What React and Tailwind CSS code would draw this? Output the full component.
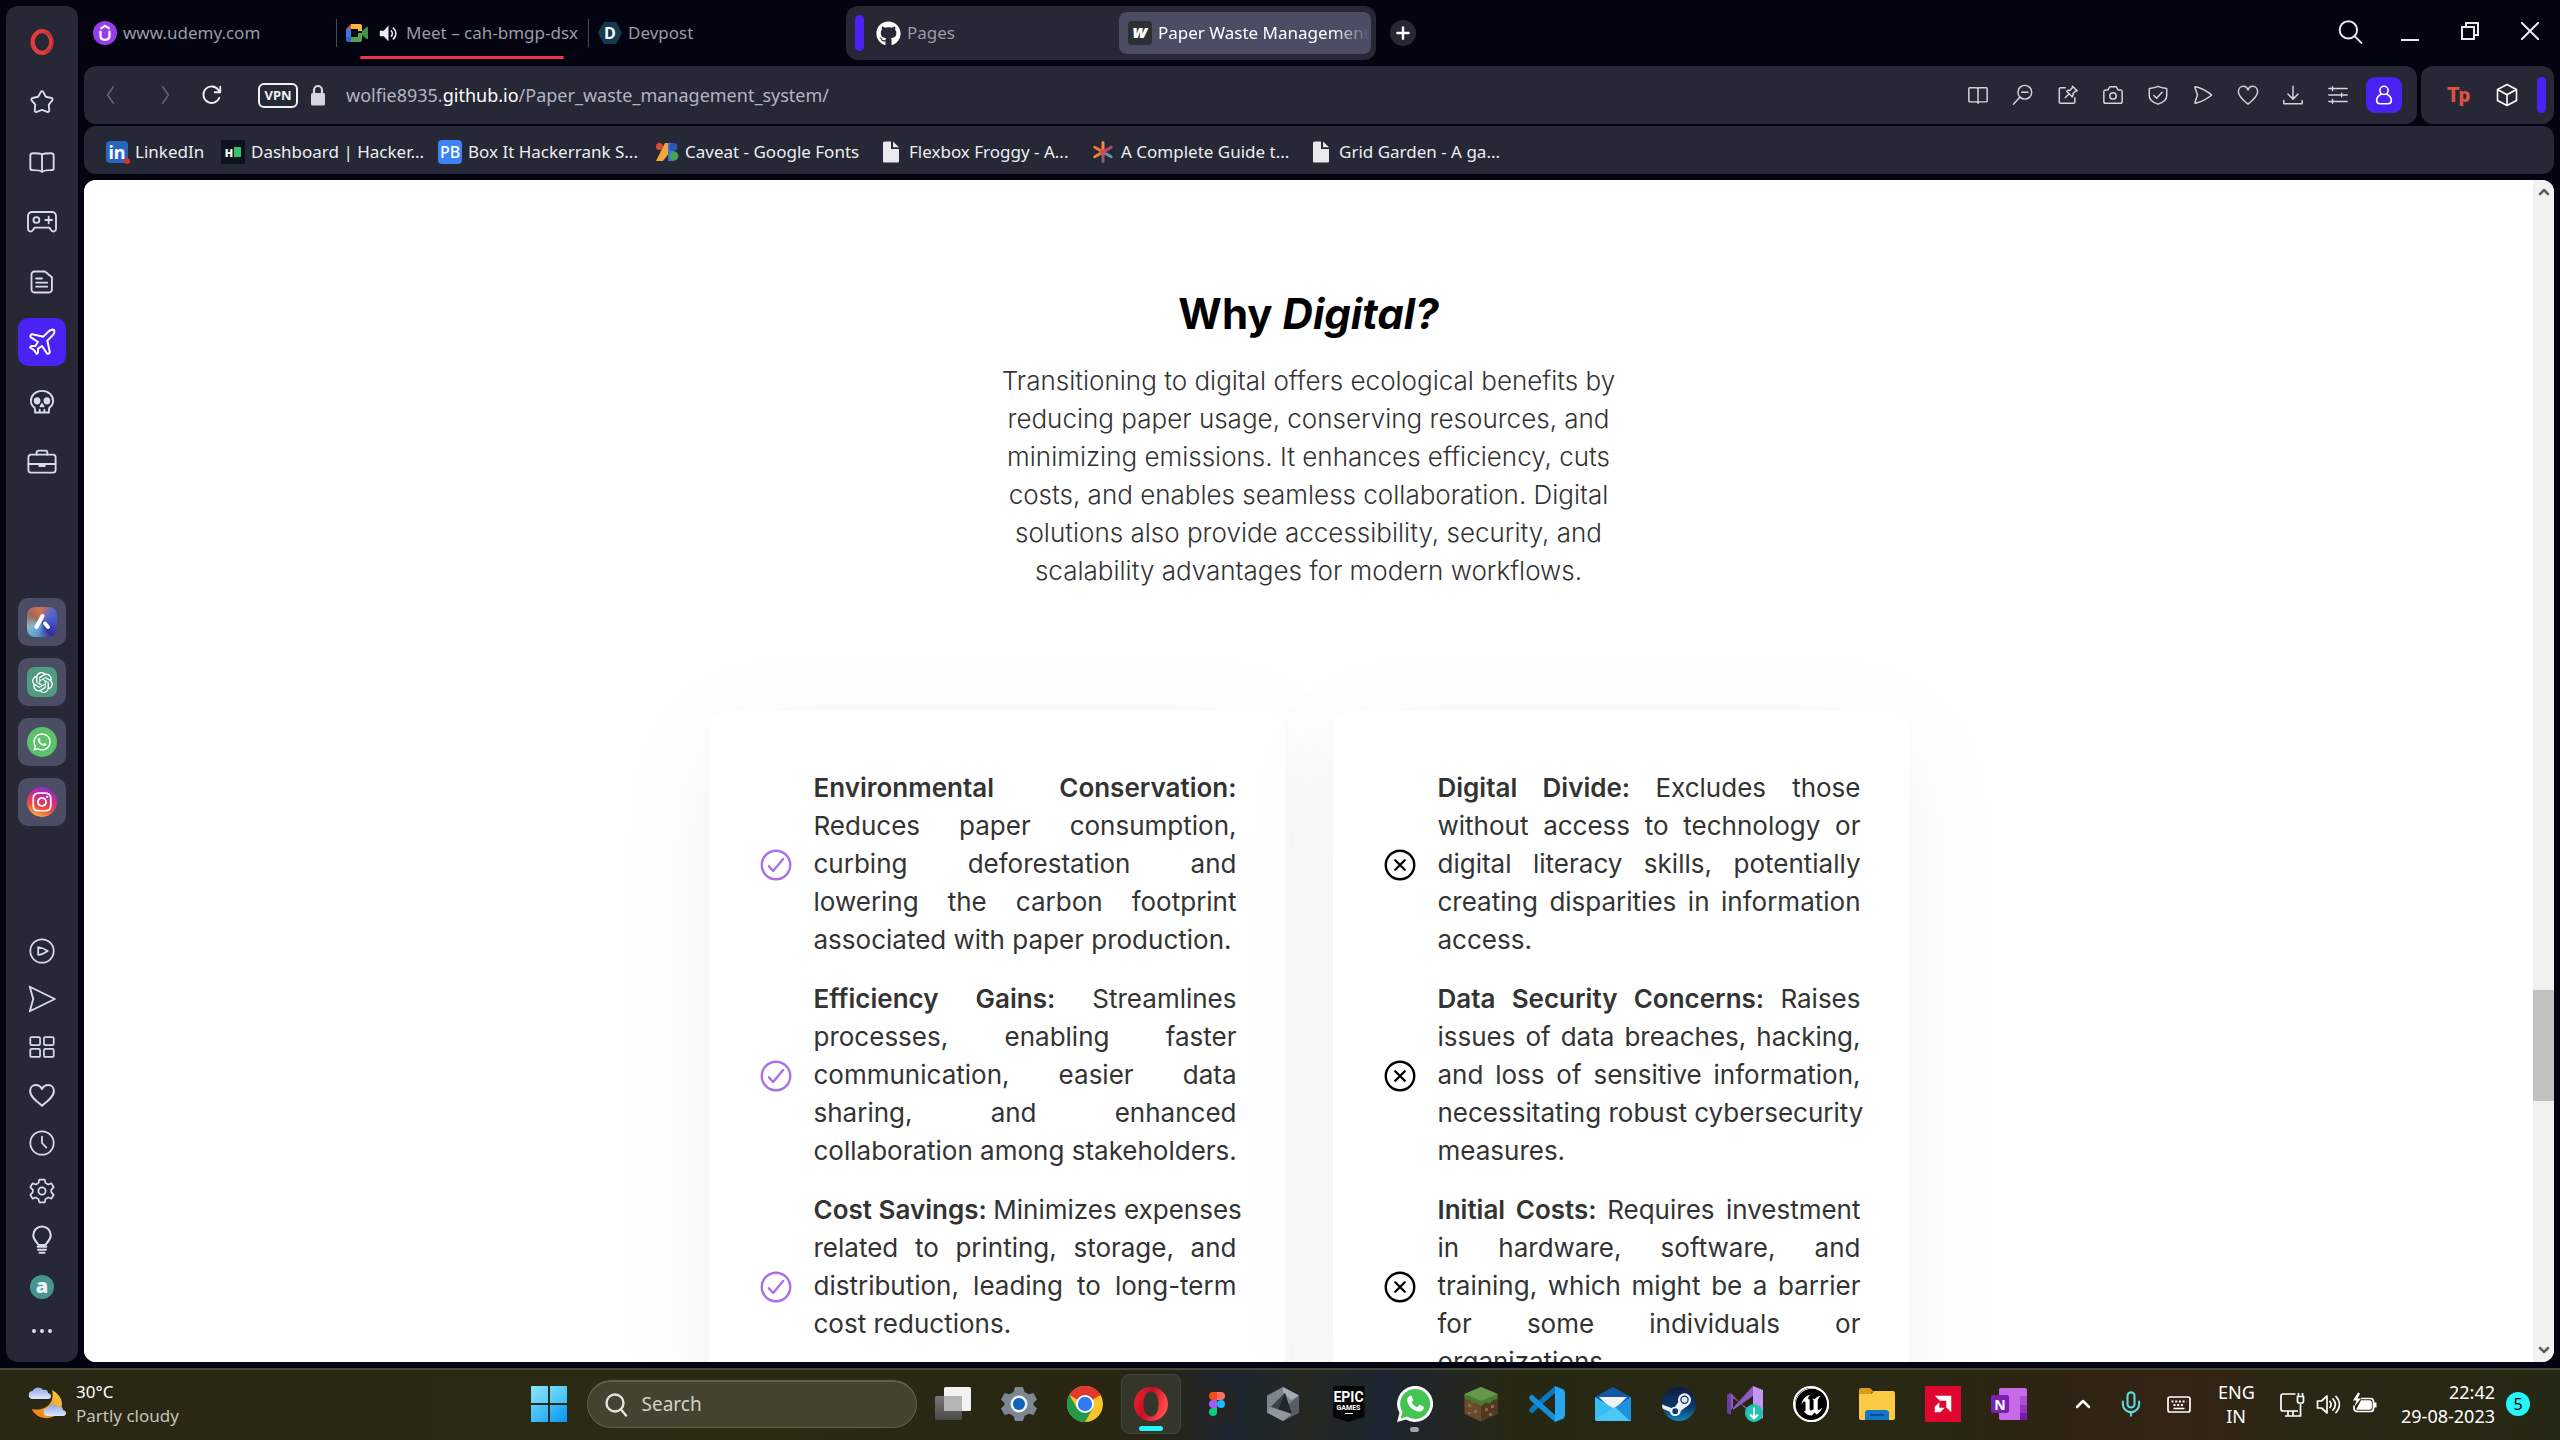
import React from "react";
import { Plane, ChevronUp, Mic } from "lucide-react";
import { FaGithub, FaWhatsapp, FaInstagram, FaSteam } from "react-icons/fa";
import { IoCheckmarkCircleOutline, IoCloseCircleOutline } from "react-icons/io5";
import { SiOpenai, SiUnrealengine } from "react-icons/si";

function Line({ children, className = "size-7", width = 1.6, box = "0 0 24 24" }) {
  return (
    <svg viewBox={box} className={className} fill="none" stroke="currentColor" strokeWidth={width} strokeLinecap="round" strokeLinejoin="round" aria-hidden="true">
      {children}
    </svg>
  );
}

const HeartPath = <path d="M12 20.5C8 17.5 2.5 13.500 2.500 8.800 2.500 5.800 4.600 4 7 4c2.200 0 4 1.200 5 3.200C13 5.200 14.800 4 17 4c2.400 0 4.500 1.800 4.500 4.800 0 4.700-5.500 8.700-9.500 11.700Z" />;

/* ---------- Sidebar ---------- */

const workspaces = [
  ["Speed dials", <Line><path d="M11 3.300c.5-.9 1.500-.9 2 0l2.300 4.200 4.800 1.100c1 .2 1.300 1.200.7 2l-3 3.700.4 4.900c.1 1-.8 1.600-1.700 1.200L12 18.700l-4.500 1.700c-.9.4-1.800-.2-1.700-1.200l.4-4.900-3-3.700c-.6-.8-.3-1.800.7-2l4.800-1.100Z" /></Line>],
  ["Reading", <Line><path d="M12 5.500C10.500 4.600 8 4.500 4.500 4.500 3 4.500 2 5 2 6.500v11c0 1.200.8 1.500 2 1.500 4 0 6.500 0 8 1.500 1.500-1.500 4-1.500 8-1.500 1.200 0 2-.3 2-1.500v-11c0-1.500-1-2-2.500-2-3.500 0-6 .1-7.500 1Zm0 0v15" /></Line>],
  ["Games", <Line className="size-8" width={1.4}><path d="M4.500 4.500h15a3 3 0 0 1 3 3v9.500c0 2.300-2.400 2.800-3.600 1.200l-1.400-2h-11l-1.400 2c-1.200 1.600-3.600 1.100-3.600-1.200V7.500a3 3 0 0 1 3-3ZM17 8v5m-2.500-2.500h5" /><circle cx="7.800" cy="10.500" r="2.200" /></Line>],
  ["Documents", <Line><path d="M5 3h9.500l6 5v10.500a2.500 2.500 0 0 1-2.500 2.500H5.500A2.500 2.500 0 0 1 3 18.500v-13A2.500 2.500 0 0 1 5.500 3ZM7 9h5M7 12.500h9.500M7 16h9.500" /></Line>],
  ["Travel", <Plane className="size-8" strokeWidth={1.5} />],
  ["Skull", <Line><path d="M12 2.500c-5.500 0-9.500 3.600-9.500 8.500 0 2.700 1 4.500 3 5.800.5.400.5.700.5 1.200v3h12v-3c0-.5 0-.8.5-1.200 2-1.300 3-3.100 3-5.800 0-4.900-4-8.500-9.500-8.500ZM10 21v-2.500m4 2.500v-2.500" /><ellipse cx="7.800" cy="11" rx="2.100" ry="2.300" fill="currentColor" /><ellipse cx="16.200" cy="11" rx="2.100" ry="2.300" fill="currentColor" /><path d="m12 13.800 1.300 2h-2.600Z" fill="currentColor" /></Line>],
  ["Work", <Line className="size-8" width={1.4}><rect x="1.800" y="6.500" width="20.400" height="13.500" rx="2" /><path d="M8 6.500V4.800c0-.8.500-1.300 1.300-1.300h5.400c.8 0 1.300.5 1.300 1.300v1.700M2 13.500h20" /><path d="M10 13.500h4v1.500h-4Z" fill="currentColor" /></Line>],
];

function AriaLogo() {
  return (
    <span className="grid size-[30px] place-items-center rounded-lg bg-[conic-gradient(from_300deg,#a0675c,#d0734a,#5a68c8,#4450c8,#3a2aa0,#5b9ad0,#86b7cf,#a0675c)]">
      <svg viewBox="0 0 24 24" className="size-6" stroke="#fff" strokeLinecap="round" aria-hidden="true">
        <path d="m12.500 6-6 11" strokeWidth="4" /><path d="m15 13.500 3 3.500" strokeWidth="4" />
      </svg>
    </span>
  );
}

const messengers = [
  ["Aria", <AriaLogo />],
  ["ChatGPT", <span className="grid size-[30px] place-items-center rounded-lg bg-[#4f9c80] text-white"><SiOpenai className="size-[21px]" /></span>],
  ["WhatsApp", <span className="grid size-[30px] place-items-center rounded-full bg-[#5dc26a] text-white"><FaWhatsapp className="size-5" /></span>],
  ["Instagram", <span className="grid size-[30px] place-items-center rounded-full bg-[linear-gradient(20deg,#f6c344_5%,#ee4a3c_35%,#d42a8c_60%,#7a2bd8_95%)] text-white"><FaInstagram className="size-[22px]" /></span>],
];

const tools = [
  ["Player", <Line className="size-[26px]"><circle cx="12" cy="12" r="10.800" /><path d="M8.500 8.300c3 .4 6 1.700 8.800 3.700-2.800 2-5.800 3.300-8.800 3.700Z" /></Line>],
  ["My Flow", <Line><path d="M1.500 1.500 23 12 1.500 22.500l3-10.500Z" /></Line>],
  ["Tabs", <Line className="size-[26px]"><rect x="1.200" y="2.800" width="9" height="7.500" rx="1.200" /><rect x="13.800" y="2.800" width="9" height="7.500" rx="1.200" /><rect x="1.200" y="13.700" width="9" height="7.500" rx="1.200" /><rect x="13.800" y="13.700" width="9" height="7.500" rx="1.200" /></Line>],
  ["Favorites", <Line className="size-[30px]">{HeartPath}</Line>],
  ["History", <Line className="size-[26px]"><circle cx="12" cy="12" r="10.800" /><path d="M12 6v6l4 4.200" /></Line>],
  ["Settings", <Line className="size-[26px]"><path d="M9.500 1.500h5l.7 3 2.500 1.500 3-1 2.100 3.500L20.500 11v2l2.300 2.500-2.100 3.500-3-1-2.500 1.500-.7 3h-5l-.7-3L6.300 18l-3 1-2.100-3.500L3.500 13v-2L1.200 8.500 3.300 5l3 1 2.500-1.500Z" /><circle cx="12" cy="12" r="3.300" /></Line>],
  ["Easy setup", <Line className="size-[30px]"><path d="M9 16.800c0-1.500-4-3.600-4-7.800a7 7 0 0 1 14 0c0 4.200-4 6.300-4 7.800ZM8.500 18.200h7M8.800 20.600h6.400M10 23h4" /></Line>],
  ["Account", <span className="grid size-6 place-items-center rounded-full bg-[#47968c] font-['Open_Sans',sans-serif] text-xl leading-none font-extrabold text-[#eef]"><span className="pb-0.5">a</span></span>],
];

function Sidebar() {
  return (
    <nav aria-label="Browser sidebar" className="mt-1.5 mb-1.5 ml-1.5 flex w-18 shrink-0 flex-col items-center rounded-xl bg-[#262835] pt-3 text-[#d8dce8]">
      <button aria-label="Opera menu" className="grid size-12 place-items-center">
        <svg viewBox="0 0 24 24" className="size-[26px]" fill="none" aria-hidden="true"><ellipse cx="12" cy="12" rx="8.600" ry="10" stroke="#e33b3b" strokeWidth="4" /><path d="M15 2.500c5 2 7 6 7 9.500s-2 7.500-7 9.500" stroke="#b8303a" strokeWidth="1.500" /></svg>
      </button>
      <div className="mt-3 flex flex-col gap-3">
        {workspaces.map(([label, icon]) => (
          <button key={label} aria-label={label} className={label === "Travel" ? "grid size-12 place-items-center rounded-[10px] bg-[#4a22f4] text-white" : "grid size-12 place-items-center"}>{icon}</button>
        ))}
      </div>
      <div className="mt-28 flex flex-col gap-3">
        {messengers.map(([label, icon]) => (
          <button key={label} aria-label={label} className="grid size-12 place-items-center rounded-[10px] bg-[#4a4d64]">{icon}</button>
        ))}
      </div>
      <div className="mt-auto mb-[11px] flex flex-col items-center">
        {tools.map(([label, icon]) => (
          <button key={label} aria-label={label} className="grid size-12 place-items-center">{icon}</button>
        ))}
        <button aria-label="More" className="grid h-10 w-12 place-items-center">
          <svg viewBox="0 0 24 24" className="size-6" fill="currentColor" aria-hidden="true"><circle cx="4" cy="12" r="2" /><circle cx="12" cy="12" r="2" /><circle cx="20" cy="12" r="2" /></svg>
        </button>
      </div>
    </nav>
  );
}

/* ---------- Tab strip ---------- */

function MeetIcon() {
  return (
    <svg viewBox="0 0 24 24" className="size-6 shrink-0" aria-hidden="true">
      <path d="M6 3h9a2 2 0 0 1 2 2v5h-4V8H6Z" fill="#f5b93a" /><path d="M6 3v5H1Z" fill="#e5483a" /><path d="M1 8h5v8H1Z" fill="#3a78e8" /><path d="M1 16h5v5H3a2 2 0 0 1-2-2Z" fill="#2f62d0" /><path d="M6 16h7v-4h4v7a2 2 0 0 1-2 2H6Z" fill="#4fa34c" /><path d="m17 10 4.500-4c.8-.5 1.500-.2 1.500.7v10.600c0 .9-.7 1.200-1.500.7L17 14Z" fill="#3f9048" />
    </svg>
  );
}

function TabStrip() {
  return (
    <header className="flex h-[66px] shrink-0 items-center text-[17px] text-[#9a9ba3]">
      <div role="tablist" className="flex items-center">
        <button role="tab" className="flex h-12 w-63 shrink-0 items-center gap-1.5 pl-[9px]">
          <span className="grid size-6 place-items-center rounded-full bg-[#9a3cea] text-white">
            <Line className="size-[18px]" width={3}><path d="M6 10v6c0 3 2.500 5 6 5s6-2 6-5v-6M7 5.500 12 2.500l5 3" /></Line>
          </span>
          <span>www.udemy.com</span>
        </button>
        <button role="tab" className="relative flex h-12 w-63 shrink-0 items-center">
          <span className="h-7 w-px shrink-0 bg-[#454857]" />
          <span className="w-2" />
          <MeetIcon />
          <svg viewBox="0 0 24 24" className="mr-2 ml-2.5 size-[19px] shrink-0" fill="#e8eaf0" aria-hidden="true"><path d="M1 8.500h5L12 2v20l-6-6.500H1Z" /><path d="M15 8c2.500 2 2.500 6 0 8M17.500 4.500c5 4 5 11 0 15" stroke="#e8eaf0" strokeWidth="2" fill="none" /></svg>
          <span className="whitespace-nowrap">Meet – cah-bmgp-dsx</span>
          <span className="absolute inset-x-6 -bottom-0.5 h-[3px] rounded-full bg-[#ee3355]" />
        </button>
        <button role="tab" className="flex h-12 w-63 shrink-0 items-center">
          <span className="h-7 w-px shrink-0 bg-[#454857]" />
          <span className="ml-[9px] grid h-[22px] w-6 place-items-center bg-[#153a50] font-['Open_Sans',sans-serif] text-base leading-none font-bold text-white [clip-path:polygon(25%_0,75%_0,100%_50%,75%_100%,25%_100%,0_50%)]">D</span>
          <span className="ml-1.5">Devpost</span>
        </button>
        <div className="ml-1.5 flex h-[54px] items-center rounded-xl bg-[#262835] pr-[5px] pl-[9px]">
          <span className="mr-[3px] h-9 w-[9px] rounded-full bg-[#4a22f4]" />
          <button role="tab" className="flex h-[42px] w-63 items-center gap-1.5 pl-[9px]">
            <FaGithub className="size-[25px] text-white" />
            <span>Pages</span>
          </button>
          <button role="tab" aria-selected="true" className="flex h-[42px] w-63 items-center gap-1.5 rounded-lg bg-[#4a4d64] px-[9px] text-white">
            <span className="grid size-6 shrink-0 place-items-center rounded-sm bg-[#2b3035] font-['Open_Sans',sans-serif] text-lg leading-none font-extrabold text-white italic"><span className="pb-1">w</span></span>
            <span className="whitespace-nowrap [mask-image:linear-gradient(to_right,#000_82%,transparent)]">Paper Waste Management</span>
          </button>
        </div>
      </div>
      <button aria-label="New tab" className="ml-3.5 grid size-[26px] place-items-center rounded-full bg-[#262835] text-white">
        <Line className="size-4" width={3.500}><path d="M12 3.500v17M3.500 12h17" /></Line>
      </button>
      <div className="-mr-1.5 ml-auto flex pb-1 text-[#e8eaf0]">
        <button aria-label="Search tabs" className="grid h-12 w-15 place-items-center"><Line className="size-[26px]" width={1.800}><circle cx="10.500" cy="11" r="8" /><path d="m16.500 17 6 6" /></Line></button>
        <button aria-label="Minimize" className="grid h-12 w-15 place-items-center"><span className="mt-[18px] h-0.5 w-[18px] bg-current" /></button>
        <button aria-label="Restore" className="grid h-12 w-15 place-items-center"><svg viewBox="0 0 18 18" className="size-[18px]" fill="none" stroke="currentColor" strokeWidth="2" aria-hidden="true"><path d="M1 5h12v12H1ZM5 5V1h12v12h-4" /></svg></button>
        <button aria-label="Close" className="grid h-12 w-15 place-items-center"><svg viewBox="0 0 18 18" className="size-[18px]" fill="none" stroke="currentColor" strokeWidth="2" aria-hidden="true"><path d="m0 0 18 18M18 0 0 18" /></svg></button>
      </div>
    </header>
  );
}

/* ---------- Address bar ---------- */

const actions = [
  ["Reader", <path d="M12 4v16M3 4h7c1.200 0 2 .5 2 1.500C12 4.500 12.800 4 14 4h7a1 1 0 0 1 1 1v13.500a1 1 0 0 1-1 1h-7c-1.200 0-2 .5-2 1.500 0-1-.8-1.500-2-1.500H3a1 1 0 0 1-1-1V5a1 1 0 0 1 1-1Z" />],
  ["Zoom out", <><circle cx="14" cy="9" r="7.500" /><path d="M8.500 14.500 1.500 22M10.500 9h7" /></>],
  ["Pin", <><path d="M9 4H4a1.500 1.500 0 0 0-1.500 1.500v14A1.500 1.500 0 0 0 4 21h14a1.500 1.500 0 0 0 1.500-1.500V15M9 15l4-4" /><path d="m17 2.500 5 5-2 .5-2.500 2.500c.3 1.500 0 2.700-1 3.500l-6-6c.8-1 2-1.300 3.500-1L16.500 4.500Z" /></>],
  ["Snapshot", <><path d="M4 6.500h2.500l2-3.500h7l2 3.500H20a2 2 0 0 1 2 2V19a2 2 0 0 1-2 2H4a2 2 0 0 1-2-2V8.500a2 2 0 0 1 2-2Z" /><circle cx="12" cy="13" r="3.500" /></>],
  ["Ad blocker", <><path d="M12 2.500c3 1.500 6 2 9.500 2.500v8c0 4-4 7-9.500 9-5.500-2-9.500-5-9.500-9V5C6 4.500 9 4 12 2.500Z" /><path d="m7.500 12.500 3 3 6-6.500" /></>],
  ["Send", <path d="M4 3c6 1.500 12 4.500 17.500 9C16 16.500 10 19.500 4 21c-.5.200-1-.3-.8-.8L6 12 3.200 3.800C3 3.300 3.500 2.800 4 3Z" />],
  ["Favorite", <path d="M12 22C8 18.500 1.500 14 1.500 8.500 1.500 5 4 2.500 7 2.500c2.200 0 4 1.500 5 4 1-2.500 2.800-4 5-4 3 0 5.500 2.500 5.500 6C22.500 14 16 18.500 12 22Z" />],
  ["Downloads", <path d="M12 2.500V16M6.500 11l5.500 5.500 5.500-5.500M2 18v3.500h20V18" />],
  ["Easy setup", <path d="M2 5h20M2 12h20M2 19h20M6 3v4M16 10v4M6 17v4" />],
];

function AddressBar() {
  return (
    <div className="flex h-[58px] shrink-0 gap-1 text-[#d2d5dd]">
      <div className="flex min-w-0 flex-1 items-center rounded-xl bg-[#262835] pr-[15px]">
        <button aria-label="Back" className="grid h-10 w-[54px] place-items-center text-[#656875]"><Line className="size-5" width={1.800}><path d="m15 2-7 10 7 10" /></Line></button>
        <button aria-label="Forward" className="grid h-10 w-[54px] place-items-center text-[#656875]"><Line className="size-5" width={1.800}><path d="m9 2 7 10-7 10" /></Line></button>
        <button aria-label="Reload" className="grid h-10 w-10 place-items-center text-[#f0f1f5]"><Line className="size-[22px]" width={2}><path d="M20 15a9 9 0 1 1-1-8.500l1.500 2M21 3v6h-6" /></Line></button>
        <button className="ml-[26px] grid h-[25px] w-10 place-items-center rounded-md border-2 border-[#f0f1f5] text-[13px] leading-none font-bold text-[#f0f1f5]">VPN</button>
        <svg viewBox="0 0 16 22" className="ml-3 h-[22px] w-4 text-[#d4d7de]" aria-label="Secure connection"><path d="M4 10V6a4 4 0 0 1 8 0v4" fill="none" stroke="currentColor" strokeWidth="2.200" /><rect x="1" y="9" width="14" height="12.500" rx="1.500" fill="currentColor" /></svg>
        <div className="relative ml-5 h-10 flex-1 text-[18px] leading-10">
          <input aria-label="Address" defaultValue="wolfie8935.github.io/Paper_waste_management_system/" className="absolute inset-0 w-full bg-transparent text-transparent outline-none" />
          <p aria-hidden="true" className="pointer-events-none text-[#b2b5c0]">wolfie8935.<span className="text-white">github.io</span>/Paper_waste_management_system/</p>
        </div>
        {actions.map(([label, icon]) => (
          <button key={label} aria-label={label} className="grid h-10 w-[45px] place-items-center"><Line className="size-[22px]" width={1.600}>{icon}</Line></button>
        ))}
        <button aria-label="Profile" className="ml-1.5 grid size-9 place-items-center rounded-[9px] bg-[#4a22f4] text-white"><Line className="size-[22px]" width={1.800}><circle cx="12" cy="7" r="4.500" /><path d="M8.500 11.500C5.500 13 4 15.500 4 18c0 2.500 1.500 3.500 4 3.500h8c2.500 0 4-1 4-3.500 0-2.500-1.500-5-4.500-6.500" /></Line></button>
      </div>
      <div className="flex items-center rounded-xl bg-[#262835] pr-2 pl-[26px]">
        <button aria-label="Toucan extension" className="w-6 text-left font-['Roboto',sans-serif] text-xl leading-none font-black text-[#e2513f]">Tp</button>
        <button aria-label="Extensions" className="ml-6 text-white"><Line className="size-6" width={1.600}><path d="m12 1.500 9.500 5v11l-9.500 5-9.500-5v-11ZM2.500 6.500l9.500 5.300 9.500-5.300M12 11.800v10.700" /></Line></button>
        <span className="ml-[18px] h-9 w-[9px] rounded-full bg-[#4a22f4]" />
      </div>
    </div>
  );
}

/* ---------- Bookmarks ---------- */

const FileIcon = <svg viewBox="0 0 24 24" className="size-6" fill="#e8eaee" aria-hidden="true"><path d="M4 3a1.500 1.500 0 0 1 1.500-1.500H12V9h8v12.500a1 1 0 0 1-1 1H5a1 1 0 0 1-1-1ZM14 1.500 20 7.300h-6Z" /></svg>;

const bookmarks = [
  ["LinkedIn", "w-29", <span className="relative grid size-[22px] place-items-center rounded-sm bg-[#2966c0] text-lg leading-none font-bold text-white">in<i className="absolute -right-0.5 -bottom-px size-1.5 rounded-full bg-[#d93025]" /></span>],
  ["Dashboard | Hacker...", "w-[217px]", <span className="flex size-6 items-center justify-center gap-px bg-[#0e141e] text-[11px] leading-none font-black text-white">H<i className="h-2.5 w-[7px] bg-[#2ec866]" /></span>],
  ["Box It Hackerrank S...", "w-[217px]", <span className="grid size-6 place-items-center rounded-sm bg-[#3b82f6] text-base leading-none font-medium text-white">PB</span>],
  ["Caveat - Google Fonts", "w-56", <svg viewBox="0 0 24 24" className="size-6" aria-hidden="true"><path d="M10 3h5v9L8 21H1Z" fill="#f2a73b" /><circle cx="4.500" cy="6.500" r="3.500" fill="#dc4a3d" /><path d="M13 3h5v18h-5Z" fill="#3a6fe0" /><circle cx="18.500" cy="7" r="4" fill="#2a58b8" /><path d="M17 11a5 5 0 0 1 0 10Z" fill="#46a458" /><circle cx="19" cy="16" r="4.500" fill="#46a458" /></svg>],
  ["Flexbox Froggy - A...", "w-[212px]", FileIcon],
  ["A Complete Guide t...", "w-[218px]", <svg viewBox="0 0 24 24" className="size-6" strokeWidth="3" strokeLinecap="round" aria-hidden="true"><path d="M12 2.500V12" stroke="#ee8a3a" /><path d="M12 12v9.500" stroke="#8a5a80" /><path d="M3.800 7.200 12 12" stroke="#ee7a3a" /><path d="M3.800 16.800 12 12" stroke="#ec8438" /><path d="M20.200 7.200 12 12" stroke="#b34a6a" /><path d="M20.200 16.800 12 12" stroke="#5a9aa8" /><circle cx="12" cy="12" r="1.500" stroke="#d64a4e" /></svg>],
  ["Grid Garden - A ga...", "w-[212px]", FileIcon],
];

function Bookmarks() {
  return (
    <nav aria-label="Bookmarks" className="mt-0.5 flex h-12 shrink-0 items-center rounded-xl bg-[#262835] pt-1 pl-[21px] text-[17px] text-[#eceef3]">
      {bookmarks.map(([label, width, icon]) => (
        <a key={label} href="#page" className={`flex shrink-0 items-center whitespace-nowrap ${width}`}>
          <span className="mr-1.5 grid size-6 place-items-center">{icon}</span>{label}
        </a>
      ))}
    </nav>
  );
}

/* ---------- Page ---------- */

const pros = [
  ["Environmental Conservation:", ["", "Reduces paper consumption,", "curbing deforestation and", "lowering the carbon footprint", "associated with paper production."]],
  ["Efficiency Gains:", ["Streamlines", "processes, enabling faster", "communication, easier data", "sharing, and enhanced", "collaboration among stakeholders."]],
  ["Cost Savings:", ["Minimizes expenses", "related to printing, storage, and", "distribution, leading to long-term", "cost reductions."]],
];

const cons = [
  ["Digital Divide:", ["Excludes those", "without access to technology or", "digital literacy skills, potentially", "creating disparities in information", "access."]],
  ["Data Security Concerns:", ["Raises", "issues of data breaches, hacking,", "and loss of sensitive information,", "necessitating robust cybersecurity", "measures."]],
  ["Initial Costs:", ["Requires investment", "in hardware, software, and", "training, which might be a barrier", "for some individuals or", "organizations."]],
];

function Card({ items, Icon, tint }) {
  return (
    <ul className="flex w-xl flex-col gap-[19px] rounded-[18px] bg-white px-12 pt-[58px] pb-12 shadow-[0_24px_112px_rgba(0,0,0,0.055)]">
      {items.map(([title, lines]) => (
        <li key={title} className="flex min-h-48 items-center gap-[19px]">
          <Icon className={`size-[38px] shrink-0 ${tint}`} aria-hidden="true" />
          <p className="min-w-0 flex-1 self-start text-[26px] leading-[38px] whitespace-nowrap text-[#333]">
            {lines.map((line, i) => (
              <span key={i} className={i === lines.length - 1 ? "block" : "block [text-align-last:justify]"}>
                {i === 0 && <strong className="font-semibold">{title} </strong>}
                {line}
              </span>
            ))}
          </p>
        </li>
      ))}
    </ul>
  );
}

function Page() {
  return (
    <div id="page" className="mt-1.5 mb-1.5 flex min-h-0 flex-1 overflow-hidden rounded-xl bg-white">
      <main className="min-w-0 flex-1 overflow-hidden bg-white pt-[110px] font-['Inter',sans-serif]">
        <h1 className="text-center text-[42px] leading-12 font-bold text-black">Why <em>Digital?</em></h1>
        <p className="mt-6 text-center text-[26px] leading-[38px] font-light text-[#333]">
          Transitioning to digital offers ecological benefits by<br />
          reducing paper usage, conserving resources, and<br />
          minimizing emissions. It enhances efficiency, cuts<br />
          costs, and enables seamless collaboration. Digital<br />
          solutions also provide accessibility, security, and<br />
          scalability advantages for modern workflows.
        </p>
        <div className="mt-[121px] flex items-start justify-center gap-12">
          <Card items={pros} Icon={IoCheckmarkCircleOutline} tint="text-[#a970e8]" />
          <Card items={cons} Icon={IoCloseCircleOutline} tint="text-black" />
        </div>
      </main>
      <div aria-hidden="true" className="flex w-[21px] shrink-0 flex-col items-center bg-[#f1f1f1] text-[#606060]">
        <Line className="mt-1.5 size-3" width={5}><path d="m4 16 8-8 8 8" /></Line>
        <span className="mt-auto h-[111px] w-full bg-[#c1c1c1]" />
        <span className="h-[243px]" />
        <Line className="mb-1.5 size-3" width={5}><path d="m4 8 8 8 8-8" /></Line>
      </div>
    </div>
  );
}

/* ---------- Taskbar ---------- */

const apps = [
  ["Task view", <svg viewBox="0 0 36 36" className="size-9" aria-hidden="true"><defs><linearGradient id="tv" x1="0" y1="0" x2="0" y2="1"><stop stopColor="#777" /><stop offset="1" stopColor="#4a4a4a" /></linearGradient></defs><rect y="10" width="27" height="24" rx="1.500" fill="url(#tv)" /><rect x="9" y="1" width="27" height="24" rx="1.500" fill="#f2f2f2" /><path d="M9 10h18v15H10.500A1.500 1.500 0 0 1 9 23.500Z" fill="#b4b4b4" /></svg>],
  ["Settings", <svg viewBox="0 0 36 36" className="size-9" aria-hidden="true"><path d="M14 1h8l1.500 5 4 2.200 5-1.300 3.500 6.500-3.500 3.600v2l3.500 3.600-3.500 6.500-5-1.300-4 2.200-1.500 5h-8l-1.500-5-4-2.200-5 1.300L0 22.600 3.500 19v-2L0 13.400l3.500-6.500 5 1.300 4-2.200Z" fill="#7b8791" /><circle cx="18" cy="18" r="8.500" fill="#eef2f5" /><circle cx="18" cy="18" r="6" fill="#0f64b5" /></svg>],
  ["Chrome", <svg viewBox="0 0 36 36" className="size-9" aria-hidden="true"><circle cx="18" cy="18" r="18" fill="#f9c32c" /><path d="M18 18 2.400 9A18 18 0 0 1 33.600 9Z" fill="#e03a2e" /><path d="M18 0A18 18 0 0 1 33.600 9H18Z" fill="#e03a2e" /><path d="M2.400 9A18 18 0 0 0 18 36l7.800-13.500H10.200Z" fill="#229a49" /><circle cx="18" cy="18" r="9" fill="#fff" /><circle cx="18" cy="18" r="7.200" fill="#2f7cf0" /></svg>],
  ["Opera", <svg viewBox="0 0 36 36" className="size-9" aria-hidden="true"><defs><linearGradient id="op" x1="0" y1="0" x2="1" y2="0.400"><stop stopColor="#f22434" /><stop offset=".5" stopColor="#c80f22" /><stop offset="1" stopColor="#ff4a4a" /></linearGradient></defs><path fillRule="evenodd" d="M18 1c9.500 0 17 7.500 17 17s-7.500 17-17 17S1 27.500 1 18 8.500 1 18 1Zm0 4.500c-4.800 0-7.500 5.500-7.500 12.500S13.200 30.500 18 30.500 25.500 25 25.500 18 22.800 5.500 18 5.500Z" fill="url(#op)" /></svg>],
  ["Figma", <svg viewBox="0 0 36 36" className="size-9" aria-hidden="true"><rect width="36" height="36" rx="3" fill="#242424" /><path d="M14 6h4v8h-4a4 4 0 0 1 0-8Z" fill="#f24e1e" /><path d="M18 6h4a4 4 0 0 1 0 8h-4Z" fill="#ff7262" /><path d="M14 14h4v8h-4a4 4 0 0 1 0-8Z" fill="#a259ff" /><circle cx="22" cy="18" r="4" fill="#1abcfe" /><path d="M14 22h4v4a4 4 0 1 1-4-4Z" fill="#0acf83" /></svg>],
  ["Unity", <svg viewBox="0 0 36 36" className="size-9" aria-hidden="true"><path d="m18 1 16 8.500v17L18 35 2 26.500v-17Z" fill="#7d858e" /><path d="m18 1 16 8.500-8 4.500L18 6Z" fill="#a5adb5" /><path d="M34 9.500v17L18 35V23Z" fill="#565d66" /><path d="M20 7 6 21l7 3 14 4-3-9Z" fill="#22262c" /><path d="m20 7-7 17-7-3Z" fill="#3c424a" /><path d="m2 26.500 4-5.500 21 7-9 7Z" fill="#8f979f" /></svg>],
  ["Epic Games", <span className="flex h-9 w-8 flex-col items-center bg-[#060606] pt-1 font-['Roboto',sans-serif] leading-none font-bold text-white [clip-path:polygon(0_0,100%_0,100%_86%,50%_100%,0_86%)]"><span className="text-sm leading-[14px]">EPIC</span><span className="text-[7px] leading-[9px]">GAMES</span><span className="h-px w-2 bg-white" /></span>],
  ["WhatsApp", <svg viewBox="0 0 36 36" className="size-9" aria-hidden="true"><path d="M0 36 2.500 27A18 18 0 1 1 9 33.500Z" fill="#fff" /><path d="m3.500 32.500 2-6.500a15 15 0 1 1 4.500 4.500Z" fill="#43c554" /><path d="M12.500 10c1-.8 2-.5 2.400.5l1.200 3c.2.600 0 1-.4 1.500l-1 1.200c1.300 2.500 3 4 5.600 5l1.500-1.700c.4-.5.800-.6 1.400-.4l3 1.400c.8.400.8 1 .5 2-.8 2.500-3.200 3.500-5.500 3-6-1.300-10-5.500-11-10.500-.3-2 .6-4 2.300-5Z" fill="#fff" /></svg>],
  ["Minecraft", <svg viewBox="0 0 36 36" className="size-9" aria-hidden="true"><path d="m18 1 16.500 7v20L18 35.500 1.500 28V8Z" fill="#6a4a2f" /><path d="M18 15v20.500L34.500 28V8Z" fill="#533822" /><path d="m18 1 16.500 7v5L30 14l-3 3.500-4-1L18 20l-5-3.500-3 .5-3.500-3-5-1V8Z" fill="#4b7a2e" /><path d="m18 1 16.500 7L18 15 1.500 8Z" fill="#66974a" /><path d="M5 18h3v3H5Zm6 6h3v3h-3Zm-6 2h3v2H5Zm17-4h3v3h-3Zm6-3h3v3h-3Zm-2 8h3v3h-3Z" fill="#8b6845" /></svg>],
  ["Visual Studio Code", <svg viewBox="0 0 36 36" className="size-9" aria-hidden="true"><path d="M26 7 3 27.500 0 25l1-3L26 0Z" fill="#0a78c0" /><path d="M26 29 3 8.500 0 11l1 3 25 22Z" fill="#148fdc" /><path d="m26 0 8.500 3.500L36 6v24l-1.500 2.500L26 36Z" fill="#2aa7f3" /></svg>],
  ["Mail", <svg viewBox="0 0 36 36" className="size-9" aria-hidden="true"><path d="M0 11 18 1l18 10v10H0Z" fill="#0e5aa8" /><path d="M4 11h28L18 25Z" fill="#f2f2f2" /><path d="M0 11 36 33v2H1.500L0 33.500Z" fill="#35bdf6" /><path d="M36 11v22.500L34.500 35 16 24Z" fill="#1e93e0" /><path d="M0 33.500 20 21l15 14H1.500Z" fill="#4ac8f8" /></svg>],
  ["Steam", <span className="grid size-[34px] place-items-center rounded-full bg-[linear-gradient(#101a44,#0c3a6c_60%,#1183bd)]"><svg viewBox="0 0 34 34" className="size-[34px]" aria-hidden="true"><path d="M0 17.500 9.500 21c1-.6 2-.9 3.200-.8L17 14l9 4.500-7.200 5.300a5.600 5.600 0 0 1-11 1L.8 21.800A17 17 0 0 1 0 17.500Z" fill="#edf1f5" /><circle cx="13.200" cy="24.200" r="3.600" fill="#0c3a6c" stroke="#edf1f5" strokeWidth="1.500" /><circle cx="22.500" cy="12.800" r="5.400" fill="#0c2a56" stroke="#edf1f5" strokeWidth="2.400" /><circle cx="22.500" cy="12.800" r="3" fill="#dfe6ec" /></svg></span>],
  ["Visual Studio Installer", <svg viewBox="0 0 36 36" className="size-9" aria-hidden="true"><path d="m26 0 10 4v28l-10 4Z" fill="#c696f5" /><path d="m26 0-1 1L4 24l-4 3V9l4-2 21 23 1 6V26L6 12v12L26 10Z" fill="#8d5bc0" /><path d="M0 9 4 7v22l-4-2Z" fill="#6c3fa0" /><circle cx="27" cy="27" r="9" fill="#20c5b0" /><path d="M27 21.500v11m-4-4 4 4 4-4" fill="none" stroke="#fff" strokeWidth="2" /></svg>],
  ["Unreal Engine", <span className="grid size-9 place-items-center rounded-full border-2 border-white bg-black text-white"><SiUnrealengine className="size-[34px]" /></span>],
  ["File Explorer", <svg viewBox="0 0 36 36" className="size-9" aria-hidden="true"><path d="M0 4a2 2 0 0 1 2-2h9l4 4h-2l-3 4H0Z" fill="#dc9a12" /><path d="M0 8h12l3-3h19a2 2 0 0 1 2 2v25a2 2 0 0 1-2 2H2a2 2 0 0 1-2-2Z" fill="#fbcb45" /><path d="M6 34v-7a3 3 0 0 1 3-3h18a3 3 0 0 1 3 3v7Z" fill="#1576c8" /><path d="M11 29h14" stroke="#0c4f90" strokeWidth="2" /></svg>],
  ["AMD Software", <span className="grid size-9 place-items-center bg-[#e0062f]"><svg viewBox="0 0 24 24" className="size-[22px]" fill="#fff" aria-hidden="true"><path d="M3 3h18v18l-5.500-5.500v-7h-7Z" /><path d="M8 10 3 15v6h6l5-5H8Z" /></svg></span>],
  ["OneNote", <svg viewBox="0 0 36 36" className="size-9" aria-hidden="true"><path d="M10 2h24a2 2 0 0 1 2 2v28a2 2 0 0 1-2 2H10a2 2 0 0 1-2-2V4a2 2 0 0 1 2-2Z" fill="#c86ae8" /><path d="M29 10h7v9h-7Z" fill="#ae4bd5" /><path d="M29 19h7v8h-7Z" fill="#9332bf" /><path d="M29 27h7v7h-7Z" fill="#7719aa" /><rect y="9" width="18" height="18" rx="2" fill="#7a1fb0" /><text x="9" y="23.500" textAnchor="middle" fontSize="14" fontWeight="700" fill="#fff" fontFamily="Open Sans">N</text></svg>],
];

function Taskbar() {
  return (
    <footer className="grid h-18 shrink-0 grid-cols-[1fr_auto_1fr] items-center border-t-2 border-[#47473a] bg-[linear-gradient(90deg,#2a2714_0%,#2a2a13_30%,#282613_45%,#1c2531_48%,#232820_51%,#1c2531_54%,#272814_59%,#282815_74%,#2d2413_79%,#342415_85%,#2b2715_90%,#252814_100%)] pb-0.5 text-white">
      <button className="flex items-center pl-7 text-left">
        <svg viewBox="0 0 38 36" className="h-9 w-[38px]" aria-hidden="true">
          <defs><linearGradient id="moon" x1="0" y1="1" x2="1" y2="0"><stop stopColor="#f2760f" /><stop offset="1" stopColor="#f9cf3f" /></linearGradient><linearGradient id="cloud" x1="0" y1="0" x2="0" y2="1"><stop stopColor="#8ea6e4" /><stop offset="1" stopColor="#dfe8fb" /></linearGradient></defs>
          <path d="M24 4c8 4 12 12 9 19-3 8-13 11-21 8-4-1.500-7-5-8.500-8C12 25 20 22 23.500 15c1.500-4 1.500-8 .5-11Z" fill="url(#moon)" />
          <path d="M5 13a4 4 0 0 1-.5-8C6 1.500 12 0 15 4c4-1 5 1.500 5 3 4 .5 4 6 0 6Z" fill="url(#cloud)" />
          <path d="M20 30a4 4 0 0 1-.500-8C21 18.500 27 17 30 21c4-1 5 1 5 3 4 .5 4 6 0 6Z" fill="url(#cloud)" />
        </svg>
        <span className="ml-2.5 text-[17px] leading-6">30°C<span className="block text-[#c4c3b8]">Partly cloudy</span></span>
      </button>
      <div className="flex items-center pl-3">
        <button aria-label="Start" className="grid size-9 grid-cols-2 gap-0.5">
          <i className="bg-[linear-gradient(135deg,#8fe0fb,#56cdf8)]" /><i className="bg-[linear-gradient(135deg,#6fdcfa,#3fbcf7)]" /><i className="bg-[linear-gradient(135deg,#5cd0f9,#29a8f5)]" /><i className="bg-[linear-gradient(135deg,#3cbcf7,#0b93f3)]" />
        </button>
        <label className="mr-[3px] ml-5 flex h-12 w-[330px] items-center rounded-full border border-t-2 border-[#5f5f4c] bg-[#434330] pl-4">
          <Line className="size-6 text-[#e4e4e0]" width={2.400}><circle cx="11" cy="10" r="8.500" /><path d="m17 16.500 5 6" /></Line>
          <input type="search" aria-label="Search" placeholder="Search" className="ml-3.5 min-w-0 flex-1 bg-transparent text-[19px] text-white outline-none placeholder:text-[#d2d2c8]" />
        </label>
        {apps.map(([label, icon]) => (
          <button key={label} aria-label={label} className={label === "Opera" ? "relative mx-[3px] grid size-15 place-items-center rounded-lg border border-[#44463a] bg-[#34362c]" : "relative mx-[3px] grid size-15 place-items-center"}>
            {icon}
            {label === "Opera" && <span className="absolute bottom-0.5 h-[5px] w-6 rounded-full bg-[#27f5fb]" />}
            {label === "WhatsApp" && <span className="absolute bottom-0.5 h-[5px] w-[9px] rounded-full bg-[#9ea3a6]" />}
          </button>
        ))}
      </div>
      <div className="flex items-center justify-end pr-[30px] text-lg leading-6">
        <button aria-label="Hidden icons" className="grid h-12 w-12 place-items-center"><ChevronUp className="size-6" strokeWidth={2.5} /></button>
        <button aria-label="Microphone in use" className="grid h-12 w-12 place-items-center text-[#5fd8e0]"><Mic className="size-7" strokeWidth={1.800} /></button>
        <button aria-label="Touch keyboard" className="grid h-12 w-12 place-items-center"><svg viewBox="0 0 24 17" className="h-[17px] w-6" fill="none" stroke="currentColor" aria-hidden="true"><rect x="1" y="1" width="22" height="15" rx="2" strokeWidth="1.700" /><path d="M4.500 5.500h15M6.500 9h11" strokeWidth="1.800" strokeDasharray="2 1.700" /><path d="M6.500 12.500h11" strokeWidth="1.600" /></svg></button>
        <button className="ml-[15px] w-9 text-center">ENG<br />IN</button>
        <button aria-label="Network, volume and battery" className="ml-[26px] flex items-center gap-[11px]">
          <svg viewBox="0 0 25 25" className="size-[25px]" fill="none" stroke="currentColor" strokeWidth="1.700" aria-hidden="true"><path d="M15.500 2H3a2 2 0 0 0-2 2v13a2 2 0 0 0 2 2h15M5 24h15.500V12M8 19v5m5-5v5M17.500 4.500h6V9a2 2 0 0 1-2 2h-2a2 2 0 0 1-2-2ZM18.500 4.500V1m4 3.500V1" /></svg>
          <svg viewBox="0 0 25 24" className="size-[25px]" fill="none" stroke="currentColor" strokeWidth="1.700" strokeLinecap="round" strokeLinejoin="round" aria-hidden="true"><path d="M1.500 8.500h4L11 3.500v17l-5.500-5h-4ZM14 9c1.500 2 1.500 4 0 6M17 6.500c3 3.500 3 7.500 0 11M20 4c4.500 5 4.500 11 0 16" /></svg>
          <svg viewBox="0 0 25 24" className="size-[25px]" fill="none" stroke="currentColor" strokeWidth="1.700" aria-hidden="true"><path d="M9 6h9.500a3 3 0 0 1 3 3v7a3 3 0 0 1-3 3H5a3 3 0 0 1-3-3v-3" /><path d="M9.500 8.500h8a1.500 1.500 0 0 1 1.500 1.500v5a1.500 1.500 0 0 1-1.500 1.500h-12Z" fill="currentColor" /><path d="M22 10h2.500v5H22Z" fill="currentColor" stroke="none" /><path d="M6 0 1 8h3.500L2.500 14 9 6H5.500L8 1Z" fill="currentColor" stroke="none" /></svg>
        </button>
        <button className="ml-6 text-right">22:42<br />29-08-2023</button>
        <span className="ml-[11px] grid size-6 place-items-center rounded-full bg-[#27f5fb] text-base leading-none text-black">5</span>
      </div>
    </footer>
  );
}

export default function App() {
  return (
    <div className="flex h-screen flex-col overflow-hidden bg-[#030410] font-['Noto_Sans',sans-serif]">
      <div className="flex min-h-0 flex-1 gap-1.5">
        <Sidebar />
        <div className="flex min-w-0 flex-1 flex-col pr-1.5">
          <TabStrip />
          <AddressBar />
          <Bookmarks />
          <Page />
        </div>
      </div>
      <Taskbar />
    </div>
  );
}
